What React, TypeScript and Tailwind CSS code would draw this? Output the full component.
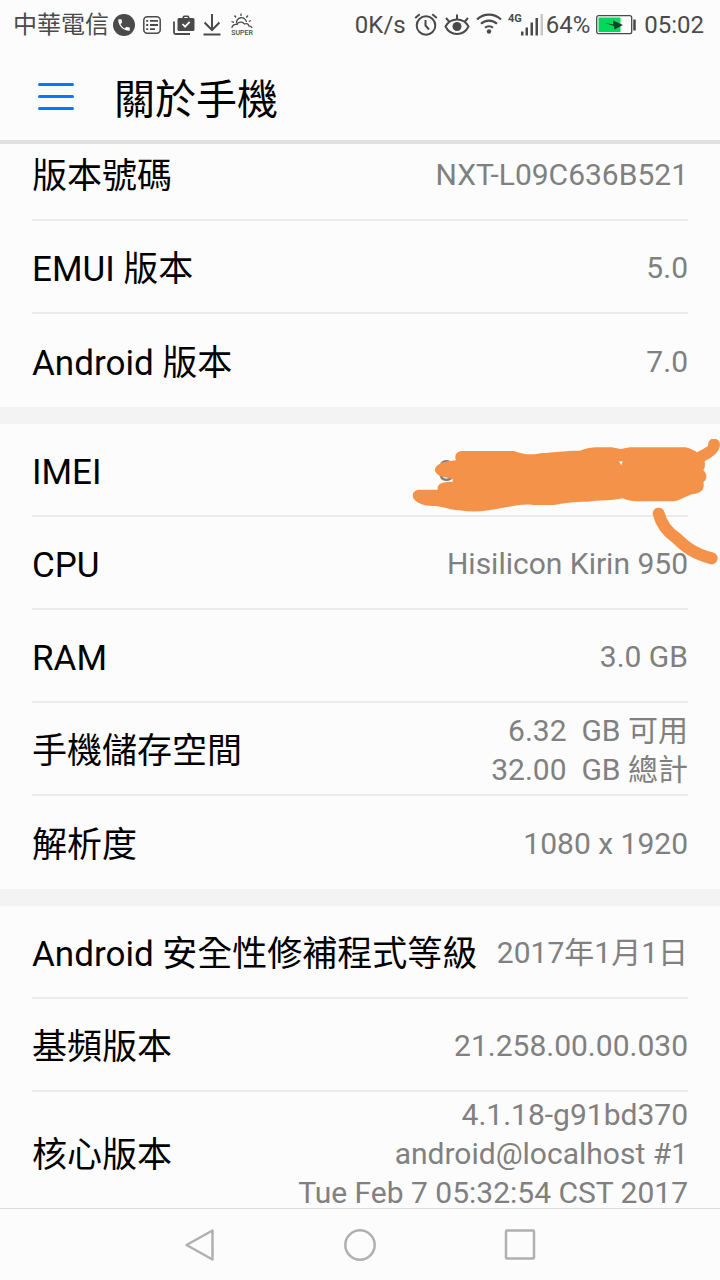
import type { ReactNode } from 'react'
import clsx from 'clsx'

interface InfoItem {
  label: string
  lines: string[]
  redacted?: boolean
}

const sections: InfoItem[][] = [
  [
    { label: '版本號碼', lines: ['NXT-L09C636B521'] },
    { label: 'EMUI 版本', lines: ['5.0'] },
    { label: 'Android 版本', lines: ['7.0'] },
  ],
  [
    { label: 'IMEI', lines: ['8'], redacted: true },
    { label: 'CPU', lines: ['Hisilicon Kirin 950'] },
    { label: 'RAM', lines: ['3.0 GB'] },
    { label: '手機儲存空間', lines: ['6.32  GB 可用', '32.00  GB 總計'] },
    { label: '解析度', lines: ['1080 x 1920'] },
  ],
  [
    { label: 'Android 安全性修補程式等級', lines: ['2017年1月1日'] },
    { label: '基頻版本', lines: ['21.258.00.00.030'] },
    { label: '核心版本', lines: ['4.1.18-g91bd370', 'android@localhost #1', 'Tue Feb 7 05:32:54 CST 2017'] },
  ],
]

function StatusBar() {
  return (
    <div className="flex h-[50px] shrink-0 items-center justify-between pl-[13px] pr-4 text-2xl text-[#4a4a4a]">
      <div className="flex items-center">
        <span>中華電信</span>
        {/* Phone */}
        <svg className="ml-1 size-[22px]" viewBox="0 0 24 24">
          <circle cx="12" cy="12" r="12" fill="currentColor" />
          <path
            transform="translate(3.600 3.600) scale(.7)"
            d="M6.620 10.790c1.440 2.830 3.760 5.140 6.590 6.590l2.200-2.200c.27-.27.67-.36 1.020-.24 1.120.37 2.330.57 3.570.57.55 0 1 .45 1 1V20c0 .55-.45 1-1 1-9.390 0-17-7.610-17-17 0-.55.45-1 1-1h3.500c.55 0 1 .45 1 1 0 1.250.2 2.450.57 3.570.11.35.03.74-.25 1.020l-2.200 2.200z"
            fill="#fcfcfc"
          />
        </svg>
        {/* List */}
        <svg className="ml-2 size-[18px]" viewBox="0 0 18 18" fill="none" stroke="currentColor">
          <rect x="0.800" y="0.800" width="16.400" height="16.400" rx="3.500" strokeWidth="1.500" />
          <path d="M3.200 4.900h2M3.200 9h2M3.200 13.100h2M7 4.900h8M7 9h8M7 13.100h5" strokeWidth="1.800" />
        </svg>
        {/* Work bag */}
        <svg className="ml-3 h-5 w-[22px]" viewBox="0 0 22 20">
          <path d="M1 6.500V17.500a1.500 1.500 0 0 0 1.500 1.500H17" fill="none" stroke="currentColor" strokeWidth="1.800" />
          <path
            d="M9.500 3V1.800L10.800.5h4.400l1.300 1.300V3H20a1.500 1.500 0 0 1 1.500 1.500v10A1.500 1.500 0 0 1 20 16H6a1.500 1.500 0 0 1-1.500-1.500v-10A1.500 1.500 0 0 1 6 3zM11.300 3h3.400V2h-3.400z"
            fill="currentColor"
            fillRule="evenodd"
          />
          <path d="m9.500 9 2.600 2.700 4.600-4.900" fill="none" stroke="#fcfcfc" strokeWidth="1.700" />
        </svg>
        {/* Download */}
        <svg className="ml-2 h-[22px] w-[18px]" viewBox="0 0 18 22" fill="none" stroke="currentColor" strokeWidth="2">
          <path d="M9 0v15.500M1.500 8.500 9 16l7.500-7.500M.5 20.500h17" />
        </svg>
        {/* Weather */}
        <svg className="ml-2.5 h-6 w-[22px]" viewBox="0 0 22 24" fill="none" stroke="currentColor" strokeWidth="1.300">
          <path d="M5.500 10.500a5 5 0 0 1 10-1.500M10 .5V3M3.500 2.500l1.600 2M17 2.500l-1.700 2M.5 8.500l2.500.8M20 7.500l-2.200 1" />
          <path d="M.8 14.800c.6-2.600 3-4 5.200-3.300C7 8.800 11.500 8 13.500 11c2.200-1 4 .2 4.300 1.800 1.700.1 2.800.9 3.400 2.200" />
          <text x="11" y="22" textAnchor="middle" fontSize="7" fontWeight="500" fill="currentColor" stroke="none">
            SUPER
          </text>
        </svg>
      </div>
      <div className="flex items-center">
        <span>0K/s</span>
        {/* Alarm */}
        <svg className="ml-2 size-6" viewBox="0 0 24 24" fill="none" stroke="currentColor" strokeWidth="2">
          <circle cx="12" cy="12.500" r="9.300" />
          <path d="M11.500 7v5.500l3.500 4M1.200 5 5.700 1.200M22.800 5l-4.500-3.800" />
        </svg>
        {/* Eye */}
        <svg className="ml-1.5 h-6 w-[26px]" viewBox="0 0 26 24" fill="none" stroke="currentColor" strokeWidth="2">
          <path d="M1.500 13.500C4 9 8 6.500 13 6.500S22 9 24.500 13.500c-2.500 5-6.500 7.500-11.500 7.500S4 18.500 1.500 13.500z" />
          <path d="M13 6.500V1.500M5.500 9 2 5M20.500 9 24 5" />
          <circle cx="13" cy="13.500" r="4.500" fill="currentColor" stroke="none" />
        </svg>
        {/* Wifi */}
        <svg className="ml-1.5 h-6 w-[26px]" viewBox="0 0 26 24" fill="none" stroke="currentColor" strokeWidth="2.200">
          <path d="M1 6.500a17 17 0 0 1 24 0M5 10.800a11.500 11.500 0 0 1 16 0M9 14.800a6 6 0 0 1 8 0" />
          <circle cx="13" cy="18.500" r="2.200" fill="currentColor" stroke="none" />
        </svg>
        {/* Mobile signal */}
        <svg className="ml-1.5 h-8 w-9" viewBox="0 0 36 32" fill="currentColor">
          <text x="0" y="13" fontSize="11" fontWeight="700">
            4G
          </text>
          <path d="M13 22.500h2.500v4H13zM17.500 18.500H20v8h-2.500zM22.500 13.500H25v13h-2.500zM27.500 9H30v17.500h-2.500z" />
          <path d="M32.500 5H35v21.500h-2.500z" fill="#c8c8c8" />
        </svg>
        <span className="ml-0.5">64%</span>
        {/* Battery */}
        <svg className="ml-1.5 h-5 w-10" viewBox="0 0 40 20">
          <rect x="0.700" y="0.700" width="35" height="18" rx="2" fill="none" stroke="currentColor" strokeWidth="1.300" />
          <rect x="2.500" y="2.500" width="22" height="14.500" fill="#00d95a" />
          <path d="m9 8 8.500 1.500L17 5.500 27 10l-8.500 4.500-.5-3.500z" fill="#1f3d2b" />
          <path d="M38.500 4.500v11" stroke="currentColor" strokeWidth="2.500" />
        </svg>
        <span className="ml-2">05:02</span>
      </div>
    </div>
  )
}

// Hand drawn marker strokes that hide the device number
function Scribble() {
  return (
    <svg
      className="pointer-events-none absolute -right-8 top-[15px] z-10 h-[130px] w-[320px]"
      viewBox="0 57 960 390"
      fill="#f4924a"
      aria-hidden="true"
    >
      <path d="M184 93H342C370 104 400 106 425 99C460 98 490 92 540 92C560 84 575 82 590 82H635L662 87L690 82H855C870 84 882 92 891 97C905 90 918 82 924 78C922 50 955 48 960 72C960 98 935 112 914 124C916 136 914 146 910 151C922 162 922 178 910 187C915 208 903 220 880 222C855 228 840 242 820 244H712C695 244 680 240 668 235C640 242 600 241 560 245C520 245 490 250 460 255H400C370 250 330 260 300 265C260 274 220 278 178 271C150 270 130 260 105 258C75 260 50 250 40 235C34 218 45 209 60 209H113C111 194 120 185 158 185V177C145 173 130 171 118 167C98 155 102 139 120 131C135 125 150 122 168 121C162 105 170 95 184 93Z" />
      <path d="M657 124h11l-4 12z" fill="#fcfcfc" />
      <path
        d="M776 281C782 305 800 335 830 355C860 385 885 402 935 415"
        fill="none"
        stroke="#f4924a"
        strokeWidth="36"
        strokeLinecap="round"
        strokeLinejoin="round"
      />
    </svg>
  )
}

function InfoRow({ item }: { item: InfoItem }) {
  return (
    <div className="relative mx-8 flex min-h-[93px] items-center justify-between border-b-2 border-[#ebebeb] pb-px pt-[3px] last:border-b-0">
      <dt className="shrink-0 pt-1 text-[35px] leading-[40px] text-black">{item.label}</dt>
      <dd
        className={clsx(
          'whitespace-pre text-[30px] leading-[39px] text-[#808080]',
          item.redacted ? 'w-[250px] text-left' : 'text-right',
        )}
      >
        {item.lines.map((line) => (
          <div key={line}>{line}</div>
        ))}
      </dd>
      {item.redacted && <Scribble />}
    </div>
  )
}

function NavButton({ label, children }: { label: string; children: ReactNode }) {
  return (
    <button type="button" aria-label={label} className="size-8">
      <svg className="size-8" viewBox="0 0 32 32" fill="none" stroke="#b0b0b0" strokeWidth="2.500" strokeLinejoin="round">
        {children}
      </svg>
    </button>
  )
}

export default function App() {
  return (
    <div className="flex h-screen flex-col overflow-hidden bg-[#fcfcfc] font-['Roboto','Noto_Sans_CJK_TC',sans-serif]">
      <StatusBar />

      {/* Header */}
      <header className="flex h-[94px] shrink-0 items-center gap-10 border-b-4 border-[#e0e0e0] pl-[38px] pt-0.5">
        <button type="button" aria-label="選單" className="flex w-9 flex-col gap-[9px]">
          <span className="h-[3px] w-full rounded-full bg-[#007dff]" />
          <span className="h-[3px] w-full rounded-full bg-[#007dff]" />
          <span className="h-[3px] w-full rounded-full bg-[#007dff]" />
        </button>
        <h1 className="pt-2 text-[41px] leading-[48px] text-black">關於手機</h1>
      </header>

      {/* Device info, scrolled a little so the first row is cut by the header */}
      <main className="min-h-0 flex-1 overflow-hidden">
        <div className="-mt-4 flex flex-col gap-[17px] bg-[#f3f3f3]">
          {sections.map((items) => (
            <dl key={items[0].label} className="bg-[#fcfcfc]">
              {items.map((item) => (
                <InfoRow key={item.label} item={item} />
              ))}
            </dl>
          ))}
        </div>
      </main>

      {/* Navigation keys */}
      <nav className="flex h-[72px] shrink-0 items-center justify-center gap-32 border-t border-[#dcdcdc]">
        <NavButton label="返回">
          <path d="M28.500 1.500v29L2.500 16z" />
        </NavButton>
        <NavButton label="主畫面">
          <circle cx="16" cy="16" r="14.700" />
        </NavButton>
        <NavButton label="最近使用">
          <rect x="2" y="1.500" width="28" height="28" rx="1" />
        </NavButton>
      </nav>
    </div>
  )
}
